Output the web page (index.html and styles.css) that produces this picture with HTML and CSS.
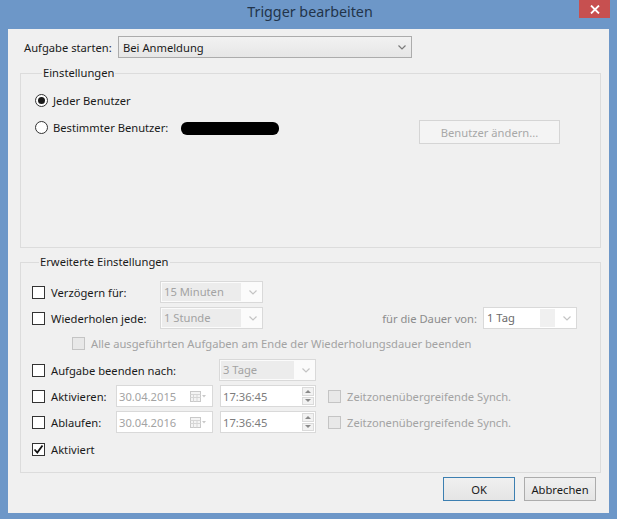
FILE: index.html
```html
<!doctype html>
<html>
    <head>
        <meta charset="utf-8">
        <title>Trigger bearbeiten</title>
        <link rel="stylesheet" href="styles.css">
    </head>
<body>
    <div class="window">
        <div class="titlebar">
            <span class="title">Trigger bearbeiten</span>
            <span class="close">
                <svg width="10" height="9" viewBox="0 0 10 9"><path d="M1 0.5 L9 8.5 M9 0.5 L1 8.5" stroke="#fff" stroke-width="1.8" fill="none"/></svg>
            </span>
        </div>

        <div class="client">
            <div class="start-row">
                <span class="start-label">Aufgabe starten:</span>
                <div class="combo combo-main">
                    <span class="combo-text">Bei Anmeldung</span>
                    <svg class="chev" width="8" height="5" viewBox="0 0 8 5"><path d="M0.5 0.5 L4 4 L7.5 0.5" stroke="#7a7a7a" stroke-width="1.2" fill="none"/></svg>
                </div>
            </div>

            <fieldset class="group group-basic">
                <legend>Einstellungen</legend>
                <div class="radio-row">
                    <span class="radio checked"></span>
                    <span class="opt-text">Jeder Benutzer</span>
                </div>
                <div class="radio-row user-row">
                    <span class="radio"></span>
                    <span class="opt-text user-label">Bestimmter Benutzer:</span>
                    <span class="redacted"></span>
                    <span class="btn btn-off">Benutzer ändern...</span>
                </div>
            </fieldset>

            <fieldset class="group group-adv">
                <legend>Erweiterte Einstellungen</legend>

                <div class="row row-delay">
                    <span class="check-opt w-128"><span class="check"></span>Verzögern für:</span>
                    <div class="combo combo-off w-103"><span class="combo-text">15 Minuten</span><svg class="chev" width="8" height="5" viewBox="0 0 8 5"><path d="M0.5 0.5 L4 4 L7.5 0.5" stroke="#c4c4c4" stroke-width="1.2" fill="none"/></svg></div>
                </div>

                <div class="row">
                    <span class="check-opt w-128"><span class="check"></span>Wiederholen jede:</span>
                    <div class="combo combo-off w-103"><span class="combo-text">1 Stunde</span><svg class="chev" width="8" height="5" viewBox="0 0 8 5"><path d="M0.5 0.5 L4 4 L7.5 0.5" stroke="#c4c4c4" stroke-width="1.2" fill="none"/></svg></div>
                    <span class="dim-label">für die Dauer von:</span>
                    <div class="combo combo-edit w-94"><span class="combo-text">1 Tag</span><svg class="chev" width="8" height="5" viewBox="0 0 8 5"><path d="M0.5 0.5 L4 4 L7.5 0.5" stroke="#c4c4c4" stroke-width="1.2" fill="none"/></svg></div>
                </div>

                <div class="row row-sub">
                    <span class="check-opt off"><span class="check check-off"></span>Alle ausgeführten Aufgaben am Ende der Wiederholungsdauer beenden</span>
                </div>

                <div class="row row-end">
                    <span class="check-opt w-187"><span class="check"></span>Aufgabe beenden nach:</span>
                    <div class="combo combo-off w-97"><span class="combo-text">3 Tage</span><svg class="chev" width="8" height="5" viewBox="0 0 8 5"><path d="M0.5 0.5 L4 4 L7.5 0.5" stroke="#c4c4c4" stroke-width="1.2" fill="none"/></svg></div>
                </div>

                <div class="row row-date">
                    <span class="check-opt w-84"><span class="check"></span>Aktivieren:</span>
                    <div class="field date-field">
                        <span class="field-text">30.04.2015</span>
                        <svg class="cal" width="17" height="11" viewBox="0 0 17 11"><rect x="0.5" y="0.5" width="10" height="10" fill="#f4f4f4" stroke="#c9c9c9"/><path d="M0.5 3.5 H10.5 M0.5 6.5 H10.5 M3.5 3.5 V10.5 M7 3.5 V10.5" stroke="#d6d6d6" fill="none"/><path d="M12 4 L16 4 L14 6.5 Z" fill="#c9c9c9"/></svg>
                    </div>
                    <div class="field time-field">
                        <span class="field-text">17:36:45</span>
                        <span class="spin"><span class="spin-up"></span><span class="spin-down"></span></span>
                    </div>
                    <span class="check-opt off sync"><span class="check check-off"></span>Zeitzonenübergreifende Synch.</span>
                </div>

                <div class="row row-date">
                    <span class="check-opt w-84"><span class="check"></span>Ablaufen:</span>
                    <div class="field date-field">
                        <span class="field-text">30.04.2016</span>
                        <svg class="cal" width="17" height="11" viewBox="0 0 17 11"><rect x="0.5" y="0.5" width="10" height="10" fill="#f4f4f4" stroke="#c9c9c9"/><path d="M0.5 3.5 H10.5 M0.5 6.5 H10.5 M3.5 3.5 V10.5 M7 3.5 V10.5" stroke="#d6d6d6" fill="none"/><path d="M12 4 L16 4 L14 6.5 Z" fill="#c9c9c9"/></svg>
                    </div>
                    <div class="field time-field">
                        <span class="field-text">17:36:45</span>
                        <span class="spin"><span class="spin-up"></span><span class="spin-down"></span></span>
                    </div>
                    <span class="check-opt off sync"><span class="check check-off"></span>Zeitzonenübergreifende Synch.</span>
                </div>

                <div class="row row-active">
                    <span class="check-opt"><span class="check checked"><svg width="11" height="11" viewBox="0 0 11 11"><path d="M1.5 5.5 L4.3 8.5 L9.5 1.5" stroke="#111" stroke-width="1.8" fill="none"/></svg></span>Aktiviert</span>
                </div>
            </fieldset>

            <div class="actions">
                <span class="btn btn-default">OK</span>
                <span class="btn">Abbrechen</span>
            </div>
        </div>
    </div>
</body>
</html>
```

FILE: styles.css
```css
* { margin: 0; padding: 0; box-sizing: border-box; }
body { font: 11.2px "Noto Sans", "Liberation Sans", sans-serif; color: #1a1a1a; background: #fff; }

.window {
    width: 617px;
    height: 519px;
    background: #6d97c8;
    display: flex;
    flex-direction: column;
    padding: 0 8px 6px 8px;
}

.titlebar {
    height: 29px;
    margin: 0 -8px;
    position: relative;
    display: flex;
    justify-content: center;
    padding-top: 2px;
}

.title {
    font-size: 14.3px;
    line-height: 20px;
    color: #22344a;
    margin-left: 3px;
}

.close {
    position: absolute;
    top: 0;
    right: 7px;
    width: 31px;
    height: 18px;
    background: #c75050;
    display: flex;
    align-items: center;
    justify-content: center;
}

.client {
    flex: 1;
    background: #f0f0f0;
    padding: 7px 0 0 12px;
}

/* first line */
.start-row {
    display: flex;
    align-items: center;
    height: 22px;
    padding-left: 4px;
}

.start-label { width: 94px; white-space: nowrap; }

.combo {
    display: flex;
    align-items: center;
    height: 22px;
    border: 1px solid #acacac;
    padding: 0 5px 0 4px;
}

.combo-text { flex: 1; white-space: nowrap; }
.combo-main {
    width: 294px;
    background: linear-gradient(#f2f2f2, #e6e6e6);
}

.combo-off {
    border-color: #d9d9d9;
    background: #fbfbfb;
    color: #a3a3a3;
    padding: 1px 5px 1px 1px;
}
.combo-off .combo-text {
    background: #ececec;
    align-self: stretch;
    padding-left: 2px;
    line-height: 18px;
    margin-right: 8px;
}

.combo-edit {
    border-color: #d9d9d9;
    background: #fff;
    color: #6a6a6a;
    padding: 1px 5px 1px 1px;
    margin-right: 23px;
}
.combo-edit .combo-text {
    align-self: stretch;
    line-height: 18px;
    padding-left: 2px;
    margin-right: 8px;
    background: linear-gradient(90deg, #fff 78%, #f0f0f0 78%);
}

/* groups */
.group {
    border: 1px solid #dcdcdc;
    margin-right: 8px;
    padding: 0 0 0 11px;
}

.group legend {
    margin-left: 7px;
    padding: 0 1px;
    line-height: 16px;
}

.group-basic {
    margin-top: 7px;
    height: 183px;
    padding-left: 14px;
}

.group-adv {
    margin-top: 6px;
    height: 219px;
}

.radio-row {
    display: flex;
    align-items: center;
    height: 18px;
    margin-top: 10px;
}

.user-row { margin-top: 10px; height: 24px; align-items: flex-start; }
.user-row .radio, .user-row .opt-text { margin-top: 2px; }

.radio {
    width: 13px;
    height: 13px;
    border: 1px solid #333;
    border-radius: 50%;
    background: #fff;
    margin-right: 5px;
    display: flex;
    align-items: center;
    justify-content: center;
}
.radio.checked::after {
    content: "";
    width: 7px;
    height: 7px;
    border-radius: 50%;
    background: #1a1a1a;
}

.user-label { width: 128px; line-height: 14px; }

.redacted {
    width: 98px;
    height: 13px;
    margin-top: 3px;
    background: #000;
    border-radius: 6px;
}

.btn {
    display: flex;
    align-items: center;
    justify-content: center;
    height: 24px;
    border: 1px solid #acacac;
    background: linear-gradient(#f0f0f0, #e5e5e5);
}

.btn-off {
    width: 141px;
    margin-left: 140px;
    margin-top: 1px;
    border-color: #d5d5d5;
    background: #f4f4f4;
    color: #a8a8a8;
}

/* advanced rows */
.row {
    display: flex;
    align-items: center;
    height: 22px;
    margin-top: 4px;
}
.row-delay { margin-top: 11px; }
.row-sub { height: 16px; margin-top: 6px; padding-left: 40px; }
.row-end { margin-top: 8px; }
.row-active { height: 16px; margin-top: 8px; }

.check-opt {
    display: flex;
    align-items: center;
    white-space: nowrap;
}
.check-opt.off { color: #a3a3a3; }

.w-84 { width: 84px; }
.w-94 { width: 94px; }
.w-97 { width: 97px; }
.w-103 { width: 103px; }
.w-128 { width: 128px; }
.w-187 { width: 187px; }

.check {
    width: 13px;
    height: 13px;
    border: 1px solid #333;
    background: #fff;
    margin-right: 6px;
    display: flex;
    align-items: center;
    justify-content: center;
    flex: none;
}
.check-off {
    border-color: #c4c4c4;
    background: #e8e8e8;
}

.dim-label {
    color: #8c8c8c;
    margin-left: auto;
    margin-right: 6px;
}

.field {
    display: flex;
    align-items: center;
    height: 22px;
    border: 1px solid #d9d9d9;
    background: #fff;
    padding-left: 2px;
}
.field-text { flex: 1; color: #a3a3a3; }

.date-field { width: 97px; padding-right: 5px; }
.time-field { width: 96px; margin-left: 7px; padding-right: 1px; }
.time-field .field-text { color: #7c7c7c; }

.spin {
    width: 12px;
    height: 18px;
    display: flex;
    flex-direction: column;
    gap: 1px;
}
.spin-up, .spin-down {
    flex: 1;
    background: #f2f2f2;
    border: 1px solid #dadada;
    display: flex;
    align-items: center;
    justify-content: center;
}
.spin-up::after {
    content: "";
    border: 3px solid transparent;
    border-top: 0;
    border-bottom: 3px solid #8a8a8a;
}
.spin-down::after {
    content: "";
    border: 3px solid transparent;
    border-bottom: 0;
    border-top: 3px solid #8a8a8a;
}

.sync { margin-left: 12px; }

.actions {
    display: flex;
    justify-content: flex-end;
    gap: 9px;
    margin-top: 4px;
    padding-right: 13px;
}
.actions .btn { width: 72px; height: 24px; }
.btn-default { border-color: #3c7fb1; }
```
